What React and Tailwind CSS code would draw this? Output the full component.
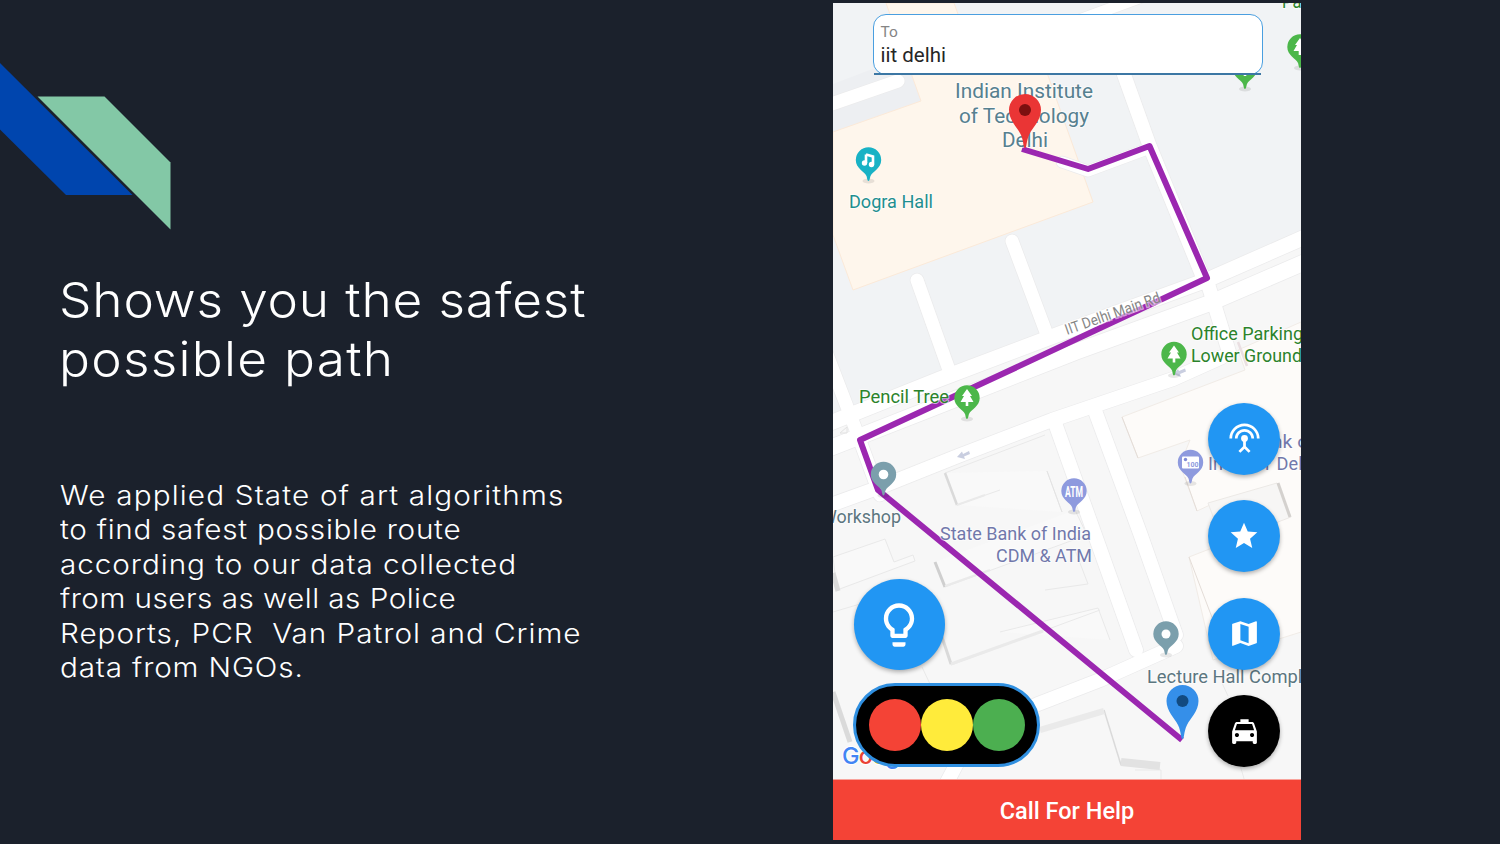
import React from "react";
import {
  MdSettingsInputAntenna,
  MdStar,
  MdLocalTaxi,
  MdLightbulbOutline,
} from "react-icons/md";

const heading = [
  ["Shows you the safest", "tracking-[0.8px]"],
  ["possible path", "tracking-[1.2px]"],
];

const body = [
  ["We applied State of art algorithms", "tracking-[1.04px]"],
  ["to find safest possible route", "tracking-[0.64px]"],
  ["according to our data collected", "tracking-[0.85px]"],
  ["from users as well as Police", "tracking-[0.41px]"],
  ["Reports, PCR  Van Patrol and Crime", "tracking-[0.87px]"],
  ["data from NGOs.", "tracking-[0.76px]"],
];

function Ribbon() {
  return (
    <svg className="block h-[170px] w-[180px]" viewBox="0 60 180 170">
      <path d="M0 63L132.500 195H66L0 129.500Z" fill="#0045ae" />
      <path d="M37.500 96.500H104.500L170.500 162.500V229.500Z" fill="#83c8a6" />
    </svg>
  );
}

// Teardrop marker whose head is centred on (x, y)
function Pin({ x, y, fill, children }) {
  return (
    <g transform={`translate(${x} ${y})`}>
      <ellipse cx="0" cy="21" rx="6" ry="2.500" fill="#000" opacity="0.09" />
      <path
        d="M0 21C-1.200 21-1.300 18-2 16C-4 11.500-12.700 8.500-12.700 0A12.700 12.700 0 0 1 12.700 0C12.700 8.500 4 11.500 2 16C1.300 18 1.200 21 0 21Z"
        fill={fill}
      />
      {children}
    </g>
  );
}

function Tree() {
  return (
    <path d="M0-9L5-2H3L6.500 4H1.300V8H-1.300V4H-6.500L-3-2H-5Z" fill="#fff" />
  );
}

function BigPin({ x, y, fill, dot }) {
  return (
    <g transform={`translate(${x} ${y})`}>
      <path
        d="M0 38C-2 38-1 31-4.500 24C-8 17-16 10-16 0A16 16 0 0 1 16 0C16 10 8 17 4.500 24C1 31 2 38 0 38Z"
        fill={fill}
      />
      <circle r="6" fill={dot} />
    </g>
  );
}

function Label({ x, y, w, fill, size = 18.5, children }) {
  return (
    <text
      x={x}
      y={y}
      textLength={w}
      lengthAdjust="spacingAndGlyphs"
      fill={fill}
      fontSize={size}
      stroke="#fff"
      strokeOpacity="0.6"
      strokeWidth="2"
      strokeLinejoin="round"
      paintOrder="stroke"
    >
      {children}
    </text>
  );
}

const roads = [
  ["M820 108L898 81", 13],
  ["M1060 27L1150-6", 11],
  ["M1117 55L1150 147L1205 282", 14],
  ["M1062 162L1088 171L1150 148", 11],
  ["M917 280L949 370", 13],
  ["M1012 241L1046 332", 13],
  ["M826 352L856 430L880 495", 13],
  ["M825 425L940 379L1075 328L1207 280L1305 237", 15],
  ["M825 450L940 405L1075 352L1210 303L1305 262", 16],
  ["M825 507L883 486L958 456L1052 420L1173 379L1222 357", 14],
  ["M1208 284L1229 352", 14],
  ["M1055 423L1136 650", 14],
  ["M1094 408L1140 533L1176 635", 14],
  ["M945 786L972 735L1038 704L1100 680L1176 646", 14],
];

function CampusMap() {
  return (
    <svg
      className="block h-full w-full"
      viewBox="833 3 468 776"
      fontFamily="Roboto, sans-serif"
    >
      <rect x="833" y="3" width="468" height="777" fill="#f7f7f7" />
      <path d="M833 3H1301V236L1207 278L1075 327L833 419Z" fill="#f1f3f5" />
      <path d="M833 84L904 57L922 101L833 133Z" fill="#edeff2" />
      <path
        d="M886 3H954L962 25L1030 25L1093 202L853 290L833 235V132L921 101Z"
        fill="#fef6ec"
        stroke="#fbe9d8"
      />
      <path
        d="M1122 417L1245 370L1238 350L1301 322V632L1213 660L1189 557L1225 543L1210 505L1197 511L1180 465L1190 440L1138 458Z"
        fill="#fdfbf9"
        stroke="#f1ece7"
      />
      <path d="M1208 503L1277 483L1291 517L1223 543Z" fill="#f7f6f5" stroke="#ece9e6" />

      <g fill="#f9f9f9" stroke="#e9e9e9" strokeWidth="1">
        <path d="M957 505L1062 468M945 472L1047 471L1062 512" fill="none" stroke="none" />
        <path d="M945 473L957 505L1062 512L1047 471Z" stroke="none" />
        <path d="M957 505L1000 490M945 473L1045 435M1047 471L1062 512" fill="none" />
        <path d="M935 562L945 587L1087 535L1075 510" />
        <path d="M833 557L885 539L894 562L913 555L915 561L837 590Z" />
        <path d="M1000 632L1098 608L1110 640" />
        <path d="M942 637L951 665L1100 610" fill="none" />
        <path d="M833 612L860 604M922 667L930 684M1045 590L1088 584L1075 550" fill="none" />
        <path d="M1135 770L1161 770V782M1222 683L1228 696M1240 765L1245 782" fill="none" />
      </g>

      <g fill="none" stroke="#ebebec" strokeLinecap="round" strokeLinejoin="round">
        {roads.map(([d, w]) => (
          <path key={d} d={d} strokeWidth={w + 1.5} />
        ))}
      </g>
      <g fill="none" stroke="#fff" strokeLinecap="round" strokeLinejoin="round">
        {roads.map(([d, w]) => (
          <path key={d} d={d} strokeWidth={w} />
        ))}
      </g>

      <g fill="none" stroke="#dadada" strokeWidth="2.500">
        <path d="M945 473L957 505" />
        <path d="M1047 471L1062 512" stroke="#e3e3e3" strokeWidth="1" />
        <path d="M935 562L945 587" stroke="#cfcfcf" strokeWidth="3" />
        <path d="M833 573L838 591" strokeWidth="5" />
        <path d="M942 637L951 664" strokeWidth="3" />
        <path d="M833 692L850 742" strokeWidth="5" />
        <path d="M1104 710L1121 765" strokeWidth="1.500" />
        <path d="M1278 483L1290 517" stroke="#d4d1ce" strokeWidth="3" />
        <path d="M1238 342L1247 366" stroke="#eadfe2" />
        <path d="M1122 417L1138 458M1185 477L1197 511M1189 557L1213 620" stroke="#e4ddd8" strokeWidth="1" />
      </g>
      <g stroke="#eaeaea" strokeWidth="6" fill="none">
        <path d="M951 664L1043 631" strokeWidth="3" />
        <path d="M1040 730L1104 711" />
        <path d="M1121 762L1160 766" strokeWidth="8" stroke="#e2e2e2" />
        <path d="M957 505L985 495M945 586L990 570" strokeWidth="2" />
      </g>
      <g fill="#c9cee0">
        <path d="M957 457L962 451.500L963 454L969 451L970 454L964 456.500L965 459Z" />
        <path d="M1173 374L1178 369L1179 371L1185 368.500L1186 371.500L1180 374L1181 377Z" />
      </g>
      <path d="M840 433L847 427V433Z" fill="none" stroke="#e2e2e2" />

      <path
        d="M1022 149L1088 169L1149.500 146L1207 278L1000 375L860 440L878 490L1182 740"
        fill="none"
        stroke="#9b27b0"
        strokeWidth="6"
        strokeLinejoin="round"
      />

      <text
        transform="translate(1067 335) rotate(-19.500)"
        textLength="100"
        lengthAdjust="spacingAndGlyphs"
        fontSize="15"
        fill="#858585"
        stroke="#fff"
        strokeOpacity="0.55"
        strokeWidth="3"
        paintOrder="stroke"
      >
        IIT Delhi Main Rd
      </text>

      <Label x="955" y="98" w="138" fill="#56808f" size={20}>Indian Institute</Label>
      <Label x="959" y="123" w="130" fill="#56808f" size={20}>of Technology</Label>
      <Label x="1002" y="147" w="46" fill="#56808f" size={20}>Delhi</Label>
      <Label x="849" y="208" w="84" fill="#1f8f90">Dogra Hall</Label>
      <Label x="859" y="403" w="90" fill="#2b832b">Pencil Tree</Label>
      <Label x="1191" y="340" w="112" fill="#2b832b">Office Parking</Label>
      <Label x="1191" y="362" w="111" fill="#2b832b">Lower Ground</Label>
      <Label x="821" y="523" w="80" fill="#5c7680">Workshop</Label>
      <Label x="940" y="540" w="151" fill="#7178ab">State Bank of India</Label>
      <Label x="996" y="562" w="96" fill="#7178ab">CDM &amp; ATM</Label>
      <Label x="1249" y="448" w="66" fill="#7178ab">Bank of</Label>
      <Label x="1208" y="470" w="109" fill="#7178ab">India IIT Delhi</Label>
      <Label x="1147" y="683" w="174" fill="#5c7680">Lecture Hall Complex</Label>
      <Label x="1282" y="8" w="56" fill="#2b832b">Parking</Label>

      <Pin x={868.5} y={160} fill="#18b2c5">
        <path d="M-2.500-5.500L4.500-3.500V4.500M-2.500-5.500V3" fill="none" stroke="#fff" strokeWidth="2.600" />
        <circle cx="-4" cy="3" r="2.700" fill="#fff" />
        <circle cx="3" cy="4.500" r="2.700" fill="#fff" />
      </Pin>
      <Pin x={967} y={398} fill="#4cb74a"><Tree /></Pin>
      <Pin x={1174} y={354.5} fill="#4cb74a"><Tree /></Pin>
      <Pin x={1300} y={47} fill="#4cb74a"><Tree /></Pin>
      <Pin x={1245} y={68} fill="#4cb74a"><Tree /></Pin>
      <Pin x={883.5} y={474.5} fill="#7b9fac"><circle r="4.800" fill="#fff" /></Pin>
      <Pin x={1166} y={634} fill="#7b9fac"><circle r="4.500" fill="#fff" /></Pin>
      <Pin x={1074} y={491} fill="#8e9ade">
        <text y="5.500" textAnchor="middle" fontSize="15.500" fontWeight="700" fill="#fff" textLength="18" lengthAdjust="spacingAndGlyphs">ATM</text>
      </Pin>
      <Pin x={1190.5} y={462.5} fill="#8e9ade">
        <rect x="-8.500" y="-6" width="17" height="12" rx="1" fill="#fff" />
        <circle cx="-5" cy="-3" r="1.700" fill="#7f8ad5" />
        <text x="2" y="4" textAnchor="middle" fontSize="7" fontWeight="700" fill="#8e9ade">100</text>
      </Pin>
      <BigPin x={1025} y={110} fill="#ea3535" dot="#7c1010" />
      <BigPin x={1182.5} y={701} fill="#358fe9" dot="#124a80" />

      <text x="842" y="764" fontSize="23.500" fontWeight="500" fontFamily="Inter, sans-serif" letterSpacing="-0.800" stroke="#fff" strokeWidth="2" paintOrder="stroke">
        <tspan fill="#4285f4">G</tspan>
        <tspan fill="#ea4335">o</tspan>
        <tspan fill="#fbbc05">o</tspan>
        <tspan fill="#4285f4">g</tspan>
        <tspan fill="#34a853">l</tspan>
        <tspan fill="#ea4335">e</tspan>
      </text>
    </svg>
  );
}

function FoldedMapIcon() {
  return (
    <svg className="size-[33px]" viewBox="0 0 24 24" fill="currentColor">
      <path d="M20.500 3l-.16.03L15 5.100 9 3 3.360 4.900c-.21.070-.36.250-.36.480V20.500c0 .28.220.5.500.5l.16-.03L9 18.900l6 2.100 5.640-1.900c.21-.07.360-.25.360-.48V3.500c0-.28-.22-.5-.5-.5zM15 19l-6-2.110V5l6 2.110V19z" />
    </svg>
  );
}

function Fab({ color = "bg-[#2196f3]", children }) {
  return (
    <button
      className={`flex size-[72px] items-center justify-center rounded-full text-white shadow-[0_2px_4px_rgba(0,0,0,0.3)] ${color}`}
    >
      {children}
    </button>
  );
}

function Phone() {
  return (
    <section className="flex h-[837px] w-[468px] flex-col overflow-hidden font-[Roboto,sans-serif]">
      <div className="relative h-[776px] w-full">
        <CampusMap />

        <div className="absolute top-[11px] left-[39.500px] flex h-[61px] w-[390px] flex-col rounded-[13px] border-[1.500px] border-[#4a9fe0] bg-white pt-[8px] pl-[7px]">
          <span className="text-[15.500px] leading-[18px] text-[#858585]">To</span>
          <span className="text-[20.500px] leading-[28px] text-[#262626]">iit delhi</span>
          <div className="absolute bottom-[-1px] left-0 h-[2px] w-[387px] bg-[#3c77a4]" />
        </div>

        <button className="absolute top-[576px] left-[20.500px] flex size-[91px] items-center justify-center rounded-full bg-[#2196f3] text-white shadow-[0_2px_4px_rgba(0,0,0,0.3)]">
          <MdLightbulbOutline className="size-[52px]" />
        </button>

        <div className="absolute top-[680px] left-[20px] flex h-[84px] w-[187px] items-center justify-center rounded-full border-[3px] border-[#2f8fe0] bg-black">
          <div className="size-[52px] rounded-full bg-[#f44336]" />
          <div className="size-[52px] rounded-full bg-[#ffeb3b]" />
          <div className="size-[52px] rounded-full bg-[#4caf50]" />
        </div>

        <div className="absolute top-[399.500px] left-[375px] flex flex-col gap-[25.500px]">
          <Fab><MdSettingsInputAntenna className="size-[33px]" /></Fab>
          <Fab><MdStar className="size-[32px]" /></Fab>
          <Fab><FoldedMapIcon /></Fab>
          <Fab color="bg-black"><MdLocalTaxi className="size-[33px]" /></Fab>
        </div>
      </div>
      <button className="flex h-[61px] w-full items-center justify-center border-t border-[#f8a49d] bg-[#f44336] pt-[3px] text-[23.500px] font-medium text-white">
        Call For Help
      </button>
    </section>
  );
}

export default function App() {
  return (
    <main className="flex h-[844px] w-[1500px] overflow-hidden bg-[#1b212c] text-white">
      <div className="flex w-[833px] flex-col pt-[60px] font-[Inter,sans-serif] font-light">
        <Ribbon />
        <h1 className="mt-[40px] ml-[59px] text-[48px] leading-[59px]">
          {heading.map(([line, tracking]) => (
            <span key={line} className={`block w-fit origin-left scale-x-[1.07] whitespace-pre ${tracking}`}>{line}</span>
          ))}
        </h1>
        <p className="mt-[91px] ml-[60px] text-[27px] leading-[34.400px]">
          {body.map(([line, tracking]) => (
            <span key={line} className={`block w-fit origin-left scale-x-[1.1] whitespace-pre ${tracking}`}>{line}</span>
          ))}
        </p>
      </div>
      <div className="pt-[3px]">
        <Phone />
      </div>
    </main>
  );
}
